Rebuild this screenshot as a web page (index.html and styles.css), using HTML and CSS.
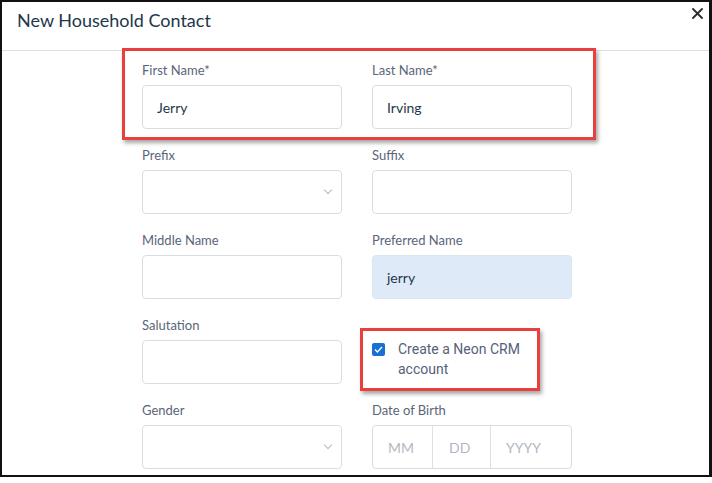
FILE: index.html
```html
<!DOCTYPE html>
<html lang="en">
<head>
    <meta charset="UTF-8">
    <title>New Household Contact</title>
    <link rel="stylesheet" href="styles.css">
</head>
<body>
    <div class="modal">
        <div class="modal-header">
            <h2>New Household Contact</h2>
            <button class="close" aria-label="Close">
                <svg width="11" height="11" viewBox="0 0 11 11"><path d="M1 1L10 10M10 1L1 10" stroke="#2b2b2b" stroke-width="1.8" stroke-linecap="round"/></svg>
            </button>
        </div>
        <form class="contact-form">
            <div class="form-group">
                <label>First Name*</label>
                <div class="input">Jerry</div>
            </div>
            <div class="form-group">
                <label>Last Name*</label>
                <div class="input">Irving</div>
            </div>
            <div class="form-group">
                <label>Prefix</label>
                <div class="input select"><span class="chevron"></span></div>
            </div>
            <div class="form-group">
                <label>Suffix</label>
                <div class="input"></div>
            </div>
            <div class="form-group">
                <label>Middle Name</label>
                <div class="input"></div>
            </div>
            <div class="form-group">
                <label>Preferred Name</label>
                <div class="input filled">jerry</div>
            </div>
            <div class="form-group">
                <label>Salutation</label>
                <div class="input"></div>
            </div>
            <div class="form-group check-group">
                <div class="checkbox-row">
                    <span class="checkbox">
                        <svg width="9" height="7" viewBox="0 0 9 7"><path d="M1 3.6L3.4 6L8 1" stroke="#fff" stroke-width="1.4" fill="none"/></svg>
                    </span>
                    <span class="check-label">Create a Neon CRM<br>account</span>
                </div>
            </div>
            <div class="form-group">
                <label>Gender</label>
                <div class="input select"><span class="chevron"></span></div>
            </div>
            <div class="form-group">
                <label>Date of Birth</label>
                <div class="input date">
                    <span class="seg mm">MM</span>
                    <span class="seg dd">DD</span>
                    <span class="seg yyyy">YYYY</span>
                </div>
            </div>
        </form>
        <div class="highlight names"></div>
        <div class="highlight crm"></div>
    </div>
</body>
</html>
```

FILE: styles.css
```css
* {
    box-sizing: border-box;
}
body {
    margin: 0;
    background: #fff;
    font-family: Lato, 'Open Sans', sans-serif;
}
.modal {
    position: relative;
    width: 712px;
    height: 477px;
    border: 2px solid #111;
    border-right-width: 3px;
    background: #fff;
    overflow: hidden;
}
.modal-header {
    display: flex;
    justify-content: space-between;
    align-items: flex-start;
    height: 49px;
    padding: 6px 0 0 15px;
    border-bottom: 1px solid #dcdfe3;

    h2 {
        margin: 0;
        font-size: 18px;
        line-height: 24px;
        font-weight: 400;
        color: #22364a;
    }
}
.close {
    border: 0;
    background: none;
    padding: 0;
    margin: 0 6px 0 0;
    display: flex;
}
.contact-form {
    display: grid;
    grid-template-columns: 200px 200px;
    column-gap: 30px;
    padding: 10px 0 0 140px;
}
.form-group {
    margin-bottom: 17px;

    label {
        display: block;
        font-size: 13px;
        line-height: 18px;
        margin-bottom: 6px;
        color: #5a6579;
    }
}
.input {
    position: relative;
    height: 44px;
    border: 1px solid #d9dde2;
    border-radius: 4px;
    padding: 0 14px;
    display: flex;
    align-items: center;
    font-size: 14px;
    color: #26384b;
    background: #fff;
}
.input.filled {
    background: #deeaf7;
    border-color: #dde6ef;
}
.chevron {
    position: absolute;
    right: 10px;
    top: 16px;
    width: 6px;
    height: 6px;
    border-right: 1px solid #b6bbc2;
    border-bottom: 1px solid #b6bbc2;
    transform: rotate(45deg);
}
.input.date {
    padding: 0;
    color: #b3b8bf;
}
.seg {
    height: 100%;
    display: flex;
    align-items: center;
    border-right: 1px solid #dde0e4;
}
.seg.mm {
    width: 60px;
    padding-left: 15px;
}
.seg.dd {
    width: 58px;
    padding-left: 16px;
}
.seg.yyyy {
    border-right: 0;
    padding-left: 15px;
}
.check-group {
    padding-top: 23px;
}
.checkbox-row {
    display: flex;
    align-items: flex-start;
    gap: 13px;
}
.checkbox {
    width: 13px;
    height: 13px;
    margin-top: 4px;
    border-radius: 2px;
    background: #1a6fd3;
    display: flex;
    align-items: center;
    justify-content: center;
}
.check-label {
    font-family: Roboto, 'Liberation Sans', sans-serif;
    font-size: 14px;
    line-height: 20px;
    color: #56617a;
}
.highlight {
    position: absolute;
    border: 3px solid #e8403f;
    box-shadow: 2px 3px 4px rgba(0, 0, 0, 0.35);
}
.highlight.names {
    left: 120px;
    top: 46px;
    width: 474px;
    height: 92px;
}
.highlight.crm {
    left: 358px;
    top: 326px;
    width: 180px;
    height: 63px;
}
```
